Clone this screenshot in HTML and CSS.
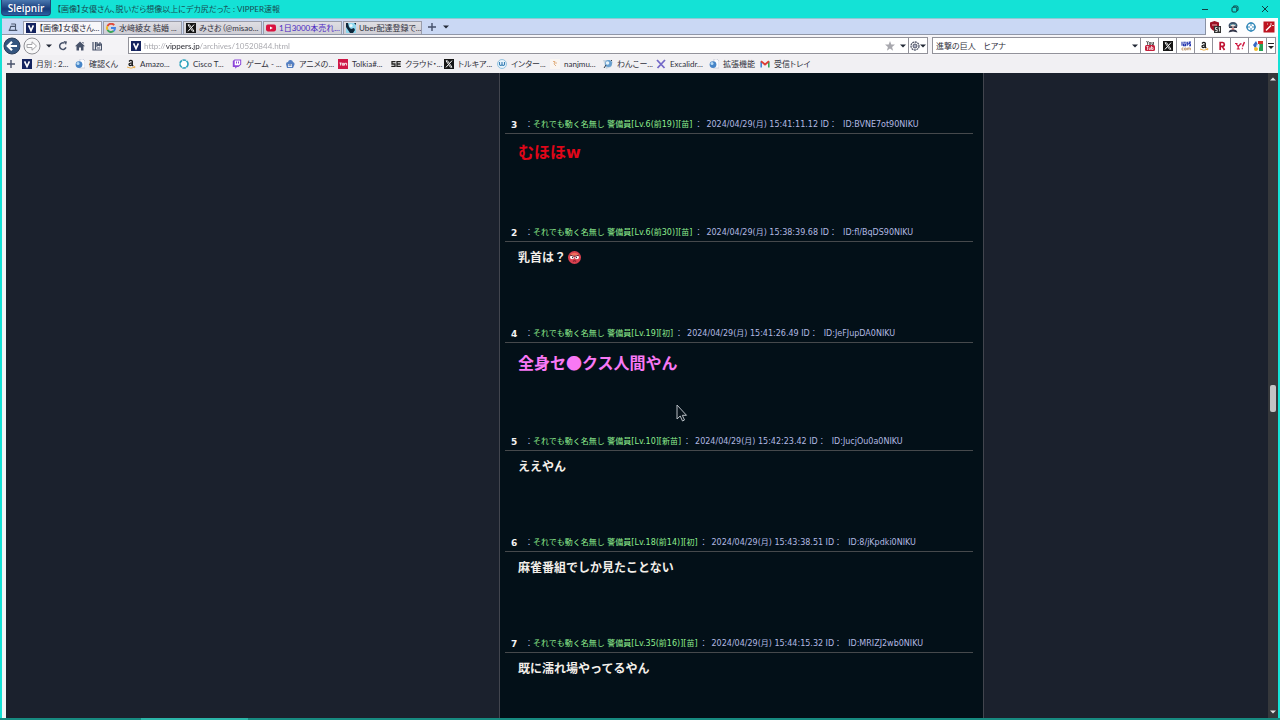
FILE: index.html
```html
<!DOCTYPE html>
<html lang="ja">
<head>
<meta charset="utf-8">
<title>【画像】女優さん、脱いだら想像以上にデカ尻だった : VIPPER速報</title>
<link rel="stylesheet" href="styles.css">
</head>
<body>
<svg class="defs" aria-hidden="true">
  <symbol id="v" viewBox="0 0 10 10"><rect width="10" height="10" fill="#14235f"/><path d="M2.6 2.4 5 7.6 7.4 2.4" fill="none" stroke="#fff" stroke-width="1.6"/></symbol>
  <symbol id="x" viewBox="0 0 10 10"><rect width="10" height="10" fill="#151515"/><path d="M2 1.8h1.6L8 8.2H6.4z" fill="#151515" stroke="#fff" stroke-width=".9"/><path d="M8 1.6 5.4 4.6M4.4 5.6 2 8.4" stroke="#fff"/></symbol>
  <symbol id="globe" viewBox="0 0 10 10"><path d="M5 0h3l2 2v7H4z" fill="#fcfcff" stroke="#b9bccb" stroke-width=".6"/><circle cx="4" cy="5.6" r="3.4" fill="#4785c8"/><circle cx="3" cy="4.6" r="1.5" fill="#b9dcf5"/></symbol>
  <symbol id="amazon" viewBox="0 0 10 10"><path d="M3 2.4Q5 .6 6.3 2.2V6.3l.9.8M6.2 3.8Q3 3.9 3 5.5 3.4 7.6 6.2 5.5" fill="none" stroke="#181818" stroke-width="1.3"/><path d="M1 8Q5 10.3 8.6 8.2M7.3 7.8l1.7-.1-.5 1.5" fill="none" stroke="#e8a63a" stroke-width=".9"/></symbol>
  <symbol id="plus" viewBox="0 0 10 10"><path d="M5 1v8M1 5h8" stroke="#46506a" stroke-width="1.4"/></symbol>
  <symbol id="down" viewBox="0 0 6 4"><path d="M0 .5h6L3 3.5z" fill="currentColor"/></symbol>
</svg>

<div class="window">
  <header class="titlebar">
    <button class="brand">Sleipnir</button>
    <span class="window-title">【画像】女優さん、脱いだら想像以上にデカ尻だった : VIPPER速報</span>
    <div class="window-buttons">
      <button aria-label="最小化"><svg viewBox="0 0 10 10"><path d="M2 5.5h6"/></svg></button>
      <button aria-label="元に戻す"><svg viewBox="0 0 10 10"><rect x="2" y="3.2" width="4.8" height="4.8" rx="1"/><path d="M3.6 2.8V2h3.2Q8 2 8 3.2v3.2h-.8"/></svg></button>
      <button aria-label="閉じる"><svg viewBox="0 0 10 10"><path d="m2 2 6 6M8 2 2 8"/></svg></button>
    </div>
  </header>

  <div class="tab-row">
    <nav class="tabs" aria-label="タブ">
      <button class="tab-list" aria-label="タブ一覧"><svg class="icon" viewBox="0 0 10 10"><path d="M3.2 2h4.3M2.4 4.4h5.2M.7 8.4h8.6M2.8 4.4 1.6 8M7.5 2v6" fill="none" stroke="#4a566e" stroke-width="1.1"/></svg></button>
      <button class="tab is-active"><svg class="icon"><use href="#v"/></svg>【画像】女優さん...</button>
      <button class="tab"><svg class="icon" viewBox="0 0 10 10"><g fill="none" stroke-width="1.9"><path d="M8.2 2.1A4 4 0 0 0 1.5 3.1" stroke="#e04a3a"/><path d="M1.5 3.1a4 4 0 0 0 0 3.8" stroke="#f0b622"/><path d="M1.5 6.9A4 4 0 0 0 7.6 8.1" stroke="#3ba55a"/><path d="M7.6 8.1A4 4 0 0 0 9 5H5" stroke="#4284e8"/></g></svg>水﨑綾女 結婚 ...</button>
      <button class="tab"><svg class="icon"><use href="#x"/></svg>みさお（@misao...</button>
      <button class="tab is-unread"><svg class="icon" viewBox="0 0 10 10"><rect y="1.6" width="10" height="6.8" rx="1.8" fill="#d9123f"/><path d="m4 3.4 2.8 1.6L4 6.6z" fill="#fff"/></svg>1日3000本売れ...</button>
      <button class="tab"><svg class="icon" viewBox="0 0 10 10"><rect width="10" height="10" fill="#8fd8ef"/><path d="M0 0h2l1 4 2 2 3-1 1 2-2 3H4L2 7 0 4zM8 0h2v2z" fill="#10283c"/><circle cx="5" cy="2.6" r="1.6" fill="#e9f8fb"/></svg>Uber配達登録で...</button>
      <button class="tab-tool" aria-label="新しいタブ"><svg class="icon"><use href="#plus"/></svg></button>
      <button class="tab-tool" aria-label="タブメニュー"><svg class="caret"><use href="#down"/></svg></button>
    </nav>
    <div class="extensions">
      <button aria-label="ブロッカー"><svg class="ext-icon" viewBox="0 0 12 12"><path d="M1 1.5 5.5 0 10 1.5V5q-.5 3.5-4.5 5Q1.500 8.500 1 5z" fill="#9c1224"/><path d="M3 4h5" stroke="#e9b0b0"/><rect x="5" y="5" width="7" height="7" fill="#333"/><path d="M8.300 6.500H6.500v2h1.700v2H6.300M9.500 7l1-.5v4" fill="none" stroke="#fff" stroke-width=".8"/></svg></button>
      <button aria-label="エージェント"><svg class="ext-icon" viewBox="0 0 12 12"><path d="M1.500 5.500Q1.500 1 6 1t4.500 4.500z" fill="#3b5069"/><path d="M3 4h6" stroke="#72c7d1"/><circle cx="6" cy="6" r="2.500" fill="#f3dfd8"/><path d="M2 5.300h3.500v1.700H2zM6.500 5.300H10v1.700H6.500zM1.500 11.500q1-3.500 4.500-3 3.500-.5 4.500 3l-4.500-1z" fill="#33364a"/><path d="M5 8h2" stroke="#c33"/></svg></button>
      <button aria-label="ターゲット"><svg class="ext-icon" viewBox="0 0 12 12"><circle cx="6" cy="6" r="4" fill="none" stroke="#3288b8" stroke-width="1.500"/><path d="M6 1v4M6 7v4M1 6h4M7 6h4" stroke="#3288b8"/></svg></button>
      <button aria-label="ワンド"><svg class="ext-icon" viewBox="0 0 12 12"><rect x=".5" y=".5" width="11" height="11" fill="#bd1420"/><path d="m3 9.500 5-5" stroke="#fff" stroke-width="1.500"/><path d="M8 2v2M9 4.500h2M4 3h1" stroke="#fff" stroke-width=".8"/></svg></button>
    </div>
  </div>

  <div class="toolbar">
    <button class="round back" aria-label="戻る"><svg viewBox="0 0 18 18"><circle cx="9" cy="9" r="8" fill="#34557f" stroke="#2b3e5a"/><path d="M14 9H5M9 4.800 4.800 9 9 13.200" fill="none" stroke="#fff" stroke-width="2.200"/></svg></button>
    <button class="round" aria-label="進む"><svg viewBox="0 0 18 18"><circle cx="9" cy="9" r="8" fill="#f7f7f8" stroke="#909095"/><path d="M4 7.500h5V4.800L13.500 9 9 13.200v-2.700H4z" fill="#fff" stroke="#a4a4a8"/></svg></button>
    <button class="tool-narrow" aria-label="履歴"><svg class="caret"><use href="#down"/></svg></button>
    <button class="tool" aria-label="更新"><svg class="icon" viewBox="0 0 10 10"><path d="M8 6.400A3.300 3.300 0 1 1 6.500 2.200" fill="none" stroke="#48536a" stroke-width="1.500"/><path d="M5.500 0 9 .6 8 4z" fill="#48536a"/></svg></button>
    <button class="tool" aria-label="ホーム"><svg class="icon" viewBox="0 0 10 10"><path d="M5 .5 10 5.200H8.500V9.500H6V6.500H4v3H1.500V5.200H0zM7 1h1.500v2z" fill="#48536a"/></svg></button>
    <button class="tool" aria-label="ブックマーク"><svg class="icon" viewBox="0 0 10 10"><path d="M1 1v8h8.500V3H5M3.500 1v8M5 1v4l1.500-1L8 5V1" fill="none" stroke="#48536a" stroke-width="1.200"/><path d="M5 7h3" stroke="#48536a"/></svg></button>
    <form class="address">
      <svg class="icon"><use href="#v"/></svg>
      <input class="url" type="text" aria-label="アドレス" value="http://vippers.jp/archives/10520844.html">
      <button type="button" class="star" aria-label="お気に入り"><svg class="icon" viewBox="0 0 10 10"><path d="m5 0 1.300 3.500 3.700.1L7.100 6 8.100 9.700 5 7.500 1.900 9.700 2.900 6 0 3.600l3.700-.1z" fill="#a8a8ae"/></svg></button>
      <button type="button" class="tool-narrow" aria-label="候補"><svg class="caret"><use href="#down"/></svg></button>
      <button type="button" class="engine" aria-label="エンジン"><svg class="icon" viewBox="0 0 10 10"><circle cx="5" cy="5" r="4" fill="none" stroke="#555a6c" stroke-width="1.300" stroke-dasharray="2 .6"/><circle cx="5" cy="5" r="2" fill="#aaaec0" stroke="#555a6c"/></svg><svg class="caret"><use href="#down"/></svg></button>
    </form>
    <form class="search">
      <input class="query" type="text" aria-label="検索" value="進撃の巨人　ヒアナ">
      <button type="button" class="tool-narrow" aria-label="検索履歴"><svg class="caret"><use href="#down"/></svg></button>
      <button type="button" class="site" aria-label="YouTube"><svg class="icon" viewBox="0 0 10 10"><path d="m1.500 0 1 1.800L3.500 0M2.500 1.800v2M4.300 1.500h1.400v2H4.300zM7 1v2.500h1.500V1" fill="none" stroke="#333" stroke-width=".8"/><rect y="4" width="10" height="6" rx="1.500" fill="#c3203c"/><path d="M1.500 5.500h2M2.500 5.500V9M4.200 6.500v2h1.200v-2M6.500 5v3.500h1.600V6.700H6.500" fill="none" stroke="#fff" stroke-width=".7"/></svg></button>
      <button type="button" class="site" aria-label="X"><svg class="icon"><use href="#x"/></svg></button>
      <button type="button" class="site" aria-label="価格.com"><svg class="icon" viewBox="0 0 10 10"><path d="M1 .8v4M2.300 1.200h2.500M2.500 3h2v1.800h-2zM6.200.8v4M5.300 2h2M7.700 1h1.800L7.700 3h2v1.800H8" fill="none" stroke="#2334ae" stroke-width="1.100"/><path d="M2.500 7H1v2h1.500M3.600 7h1.600v2H3.600zM6.400 9.200V7h1.500v2.200M7.900 7h1.500v2.200" fill="none" stroke="#b98a5c" stroke-width=".8"/></svg></button>
      <button type="button" class="site" aria-label="Amazon"><svg class="icon"><use href="#amazon"/></svg></button>
      <button type="button" class="site" aria-label="楽天"><svg class="icon" viewBox="0 0 10 10"><path d="M3.200 9V1.500h2.300q1.800.2 1.800 2T5.500 5.400H3.200M5.300 5.400 7.500 9" fill="none" stroke="#c01232" stroke-width="1.700"/></svg></button>
      <button type="button" class="site" aria-label="Yahoo"><svg class="icon" viewBox="0 0 10 10"><path d="M0 2.500h2.500M1 2.500l2.200 3L5.500 3M3.200 5.500V8M1.800 8h3M4.800 2.800h1.800" fill="none" stroke="#d01840" stroke-width="1.200"/><path d="m9.500 1-2 4.500M6.800 7.600h1" stroke="#d01840" stroke-width="1.500"/></svg></button>
      <button type="button" class="site" aria-label="Google"><svg class="icon" viewBox="0 0 10 10"><rect x="5" width="5" height="3" fill="#d9352c"/><rect x="6" y="3" width="4" height="7" fill="#24a156"/><path d="M0 4 3 0l2 4-3 3z" fill="#3568c5"/><circle cx="3" cy="8" r="2" fill="#f0b92a"/><path d="M3.500 3.500h3v3h-3z" fill="#e8f2ff"/></svg></button>
      <button type="button" class="site-menu" aria-label="検索メニュー"><svg class="icon" viewBox="0 0 10 10"><path d="M2 2.500h6" stroke="#222"/><path d="M2 5h6L5 8z" fill="#222"/></svg></button>
    </form>
  </div>

  <nav class="bookmarks" aria-label="ブックマーク">
    <button class="add" aria-label="追加"><svg class="icon"><use href="#plus"/></svg></button>
    <a href="#"><svg class="icon"><use href="#v"/></svg>月別 : 2...</a>
    <a href="#" class="is-short"><svg class="icon"><use href="#globe"/></svg>確認くん</a>
    <a href="#"><svg class="icon"><use href="#amazon"/></svg>Amazo...</a>
    <a href="#"><svg class="icon" viewBox="0 0 10 10"><circle cx="5" cy="5" r="4" fill="#fff" stroke="#2ea3bd" stroke-width="1.700" stroke-dasharray="3.600 .6"/></svg>Cisco T...</a>
    <a href="#"><svg class="icon" viewBox="0 0 10 10"><path d="M.8 2 2.500.5h6.700v5L6.500 8H5L3.200 9.700V8H.8z" fill="#8b45d9"/><path d="M2.700 1.500h5.500V5L7 6.200H2.700z" fill="#fff"/><path d="M4.500 2.500v2M6.500 2.500v2" stroke="#8b45d9"/></svg>ゲーム - ...</a>
    <a href="#"><svg class="icon" viewBox="0 0 10 10"><path d="M1 5Q1 3 3 3 3.500.8 5.500 1T8 3Q10 3.500 9.500 5.500L8 9H2z" fill="#547fc2"/><path d="M3 5h4v3H3z" fill="#e8eef8"/><path d="M3.500 6h3" stroke="#304c83"/></svg>アニメの...</a>
    <a href="#"><svg class="icon" viewBox="0 0 10 10"><rect width="10" height="10" fill="#cf1747"/><path d="M1.500 4h2.200M2.600 4v2.500M4.300 4.300h1.500v1.900H4.300zM6.600 6.500V4.300h2v2.200" fill="none" stroke="#fff" stroke-width=".9"/></svg>Tolkia#...</a>
    <a href="#"><svg class="icon" viewBox="0 0 10 10"><path d="M4.500 2.700H1V5h3v2.400H.3M9.900 2.700H6v4.700h3.900M6 5h3.500" fill="none" stroke="#222" stroke-width="1.300"/></svg>クラウド・...</a>
    <a href="#"><svg class="icon"><use href="#x"/></svg>トルキア...</a>
    <a href="#"><svg class="icon" viewBox="0 0 10 10"><circle cx="5" cy="5" r="4.500" fill="#e8f4fb" stroke="#80b7d9" stroke-width=".8"/><path d="M2.500 3v2.500q1.200 2 2.500 0V3v2.500q1.300 2 2.500 0V3" fill="none" stroke="#397fb5" stroke-width="1.100"/></svg>インター...</a>
    <a href="#"><svg class="icon" viewBox="0 0 10 10"><rect width="10" height="10" fill="#faf6f2"/><path d="M3 2.500h2L4 5l2 2M6 3v2" fill="none" stroke="#e2b283"/></svg>nanjmu...</a>
    <a href="#"><svg class="icon" viewBox="0 0 10 10"><path d="M0 1h7l3 2-2 5-5 2z" fill="#c8d5e0"/><circle cx="5.500" cy="4.500" r="3.500" fill="#679fcf"/><circle cx="4.500" cy="4" r="1.800" fill="#e6f2f8"/><path d="m1 9 2-3M8 1l1 1" stroke="#303c4b"/></svg>わんこー...</a>
    <a href="#"><svg class="icon" viewBox="0 0 10 10"><path d="m1 1 7.500 8M9 1 1.500 9" stroke="#7368c7" stroke-width="1.800"/></svg>Excalidr...</a>
    <a href="#" class="is-short"><svg class="icon"><use href="#globe"/></svg>拡張機能</a>
    <a href="#"><svg class="icon" viewBox="0 0 10 10"><path d="M1.200 8.500v-6" stroke="#4285d4" stroke-width="1.600"/><path d="M8.800 8.500v-6" stroke="#35a35a" stroke-width="1.600"/><path d="M1 2.200 5 5.500 9 2.200" fill="none" stroke="#db3e36" stroke-width="1.800"/></svg>受信トレイ</a>
  </nav>

  <div class="viewport">
    <div class="page">
      <main class="thread">
        <article class="post">
          <h2><b>3</b><span class="name">：<em>それでも動く名無し 警備員[Lv.6(前19)][苗]</em>：</span><span>2024/04/29(月) 15:41:11.12 ID：</span><span class="id">ID:BVNE7ot90NIKU</span></h2>
          <p class="large red">むほほw</p>
        </article>
        <article class="post">
          <h2><b>2</b><span class="name">：<em>それでも動く名無し 警備員[Lv.6(前30)][苗]</em>：</span><span>2024/04/29(月) 15:38:39.68 ID：</span><span class="id">ID:fl/BqDS90NIKU</span></h2>
          <p>乳首は？<svg class="emoji" viewBox="0 0 12 12" role="img" aria-label="怒り顔"><circle cx="6" cy="6" r="6" fill="#d9404f"/><path d="M1 4q5-5 10 0" fill="#ee705c"/><circle cx="3.800" cy="5.800" r="1.900" fill="#fff"/><circle cx="8.200" cy="5.800" r="1.900" fill="#fff"/><path d="M1.500 3.600 5.700 5M10.500 3.600 6.300 5M4.500 9.500q1.500-1 3 0" fill="none" stroke="#55131e" stroke-width=".8"/><circle cx="4.300" cy="6" r=".6" fill="#35131e"/><circle cx="7.700" cy="6" r=".6" fill="#35131e"/></svg></p>
        </article>
        <article class="post">
          <h2><b>4</b><span class="name">：<em>それでも動く名無し 警備員[Lv.19][初]</em>：</span><span>2024/04/29(月) 15:41:26.49 ID：</span><span class="id">ID:JeFJupDA0NIKU</span></h2>
          <p class="large pink">全身セ●クス人間やん</p>
        </article>
        <article class="post">
          <h2><b>5</b><span class="name">：<em>それでも動く名無し 警備員[Lv.10][新苗]</em>：</span><span>2024/04/29(月) 15:42:23.42 ID：</span><span class="id">ID:JucjOu0a0NIKU</span></h2>
          <p>ええやん</p>
        </article>
        <article class="post">
          <h2><b>6</b><span class="name">：<em>それでも動く名無し 警備員[Lv.18(前14)][初]</em>：</span><span>2024/04/29(月) 15:43:38.51 ID：</span><span class="id">ID:8/jKpdki0NIKU</span></h2>
          <p>麻雀番組でしか見たことない</p>
        </article>
        <article class="post">
          <h2><b>7</b><span class="name">：<em>それでも動く名無し 警備員[Lv.35(前16)][苗]</em>：</span><span>2024/04/29(月) 15:44:15.32 ID：</span><span class="id">ID:MRIZJ2wb0NIKU</span></h2>
          <p>既に濡れ場やってるやん</p>
        </article>
      </main>
    </div>
    <div class="scrollbar">
      <svg class="caret up"><use href="#down"/></svg>
      <div class="track"><div class="thumb"></div></div>
      <svg class="caret"><use href="#down"/></svg>
    </div>
  </div>
  <div class="status"><div class="progress"></div></div>
</div>
<svg class="pointer" viewBox="0 0 12 18" aria-hidden="true"><path d="M1 1v14l3.200-3 2.300 5 2-1-2.200-4.700H10.500z" fill="#08131b" stroke="#b8bec4"/></svg>
</body>
</html>
```

FILE: styles.css
```css
* { box-sizing: border-box; }

body {
  margin: 0;
  height: 100vh;
  overflow: hidden;
  background: #14e2d6;
  font-family: Lato, "Noto Sans CJK JP", sans-serif;
  font-size: 8px;
  line-height: 12px;
  color: #30303c;
}

button, input { font: inherit; color: inherit; padding: 0; border: 0; background: none; }
button { display: flex; align-items: center; justify-content: center; }
a { color: inherit; text-decoration: none; }
.defs { position: absolute; width: 0; height: 0; }
.icon { width: 10px; height: 10px; flex: none; }
.caret { width: 6px; height: 4px; flex: none; color: #222836; }
.up { transform: rotate(180deg); }

.window { display: flex; flex-direction: column; height: 100vh; }

/* Title bar */
.titlebar { display: flex; align-items: center; height: 18px; padding-left: 1px; flex: none; }
.brand {
  width: 50px;
  height: 16px;
  align-self: flex-start;
  border: 1px solid #234475;
  border-top: 0;
  border-radius: 0 0 4px 4px;
  background: linear-gradient(#4a78b0, #173a78 60%, #2a62a4);
  color: #fff;
  font-family: "Open Sans", sans-serif;
  font-size: 10px;
  font-weight: 600;
}
.window-title { margin-left: 6px; flex: 1; color: #174c52; font-feature-settings: "palt"; white-space: nowrap; }
.window-buttons { display: flex; }
.window-buttons button { width: 30px; height: 18px; }
.window-buttons svg { width: 10px; height: 10px; fill: none; stroke: #103f43; stroke-width: 1; }

/* Tabs */
.tab-row { display: flex; height: 18px; margin: 0 2px; background: #f8f7fa; flex: none; }
.tabs {
  display: flex;
  align-items: flex-end;
  flex: 1;
  height: 17px;
  padding-left: 2px;
  background: #cad8f4;
  border-top: 1px solid #8fc9d4;
  border-right: 1px solid #8891a4;
  border-bottom: 1px solid #9097a8;
}
.tab-list { width: 18px; height: 15px; margin-right: 1px; }
.tab {
  width: 79px;
  height: 13px;
  margin-right: 1px;
  padding-left: 2px;
  gap: 3px;
  justify-content: flex-start;
  border: 1px solid #9a9daa;
  border-bottom: 0;
  background: linear-gradient(#dfdee3, #cfced5);
  font-feature-settings: "palt";
  white-space: nowrap;
  overflow: hidden;
}
.tab.is-active { background: #f8f7fa; }
.tab.is-unread { color: #4a25c2; }
.tab-tool { width: 14px; height: 14px; margin-left: 2px; }
.tab-tool + .tab-tool { margin-left: 0; }
.extensions { display: flex; align-items: center; justify-content: space-around; width: 72px; background: #fdfdfe; }
.ext-icon { width: 12px; height: 12px; }

/* Toolbar */
.toolbar { display: flex; align-items: center; height: 19px; margin: 0 2px; padding: 0 2px 0 1px; background: #f4f3f6; flex: none; }
.round { width: 18px; height: 18px; margin-right: 2px; }
.round svg { width: 18px; height: 18px; }
.tool { width: 17px; height: 16px; }
.tool-narrow { width: 11px; height: 14px; }
.address, .search { display: flex; align-items: center; height: 17px; margin: 0; border: 1px solid #92929a; background: #fff; }
.address { flex: 1; margin-left: 23px; padding-left: 2px; }
.url {
  flex: 1;
  min-width: 0;
  height: 15px;
  margin-left: 3px;
  outline: 0;
  background: linear-gradient(90deg, #a3a3a9 22px, #24242c 22px, #24242c 56px, #a3a3a9 56px);
  -webkit-background-clip: text;
  background-clip: text;
  -webkit-text-fill-color: transparent;
}
.star { width: 14px; }
.engine { width: 19px; height: 15px; border-left: 1px solid #92929a; }
.search { width: 344px; margin-left: 4px; }
.query { flex: 1; min-width: 0; padding-left: 3px; font-feature-settings: "palt"; outline: 0; }
.site { width: 18px; height: 15px; border-left: 1px solid #92929a; }
.site-menu { width: 9px; height: 15px; border-left: 1px solid #92929a; }

/* Bookmarks */
.bookmarks {
  display: flex;
  align-items: center;
  height: 18px;
  margin: 0 2px;
  padding-left: 3px;
  background: #f1f0f3;
  font-feature-settings: "palt";
  white-space: nowrap;
  flex: none;
}
.add { width: 11px; margin-right: 6px; }
.bookmarks a { display: flex; align-items: center; gap: 4px; width: 53px; }
.bookmarks .is-short { width: 51px; }

/* Content */
.viewport { display: flex; flex: 1; min-height: 0; margin: 0 2px; border-left: 4px solid #f3f5f6; }
.page { display: grid; grid-template-columns: 493fr 485px 284fr; flex: 1; background: #1b212d; overflow: hidden; }
.thread {
  grid-column: 2;
  padding: 43px 10px 0 5px;
  border: 1px solid #42454e;
  border-width: 0 1px;
  background: #031018;
  font-family: "DejaVu Sans", "Noto Sans CJK JP", sans-serif;
}
.post h2 {
  display: flex;
  align-items: center;
  height: 18px;
  margin: 0;
  padding-left: 6px;
  border-bottom: 1px solid #46494c;
  color: #b2b9e2;
  font-size: 8px;
  font-weight: 400;
  white-space: pre;
}
.post b { width: 14px; color: #f4f4f4; font-size: 9px; }
.post .name { margin-right: 4px; }
.post em { margin-right: 2px; font-style: normal; color: #8eed8e; }
.post .id { margin-left: 6px; }
.post p {
  display: flex;
  align-items: center;
  height: 21px;
  margin: 5px 0 57px;
  padding-left: 13px;
  color: #f2eee9;
  font-size: 12px;
  font-weight: 700;
}
.post .large { height: 28px; font-size: 16px; }
.post .red { color: #e00618; }
.post .pink { color: #f878f4; font-family: "Noto Sans CJK JP", sans-serif; }
.emoji { width: 13px; height: 13px; margin-left: 2px; }

.scrollbar { display: flex; flex-direction: column; align-items: center; width: 10px; padding: 4px 0; background: #36383b; }
.scrollbar .caret { color: #e2e2e4; }
.track { display: flex; flex-direction: column; flex: 1; width: 6px; }
.track::before { content: ""; flex: 304; }
.track::after { content: ""; flex: 298; }
.thumb { height: 27px; border-radius: 2px; background: #c3c3c4; }

.status { height: 2px; background: #178a80; flex: none; }
.progress { width: 107px; height: 2px; margin-left: 11%; background: #2bb5a8; }

.pointer { position: absolute; left: 676px; top: 404px; width: 12px; height: 18px; }
```
